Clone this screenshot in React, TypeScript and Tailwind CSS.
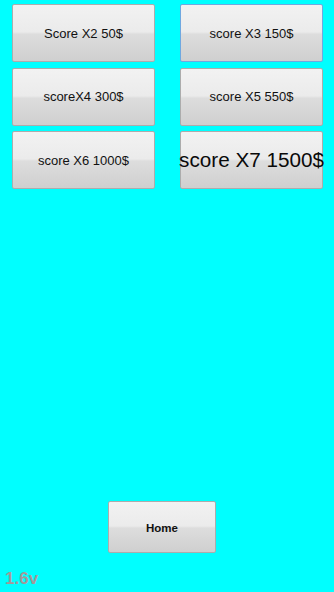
import React from "react";

const btn =
  "flex items-center justify-center whitespace-nowrap h-[58px] border border-[#acacac] rounded-[2px] bg-[linear-gradient(to_bottom,#f2f2f2_0%,#ebebeb_48%,#dddddd_52%,#cfcfcf_100%)] text-[#111] text-[13px] leading-none p-0";

export default function App() {
  return (
    <div className="w-[334px] h-[592px] bg-[#00ffff] overflow-hidden font-['Liberation_Sans',Arial,sans-serif] flex flex-col">
      <div className="grid grid-cols-[143px_143px] gap-x-[25px] gap-y-[5.5px] pl-[12px] pt-[4px]">
        <button className={btn}>Score X2 50$</button>
        <button className={btn + " !border-[#6fa8e0]"}>score X3 150$</button>
        <button className={btn}>scoreX4 300$</button>
        <button className={btn}>score X5 550$</button>
        <button className={btn}>score X6 1000$</button>
        <button className={btn + " !text-[20.7px] !text-[#0a0a0a]"}>score X7 1500$</button>
      </div>
      <button className="mt-[312px] ml-[108px] w-[108px] h-[52px] flex items-center justify-center pt-[3px] border border-[#acacac] rounded-[2px] bg-[linear-gradient(to_bottom,#f2f2f2_0%,#ebebeb_48%,#dddddd_52%,#cfcfcf_100%)] text-[#111] text-[11.5px] font-bold leading-none">
        Home
      </button>
      <div className="mt-[17px] ml-[5px] text-[17px] font-bold leading-none text-[#a39999]">1.6v</div>
    </div>
  );
}
